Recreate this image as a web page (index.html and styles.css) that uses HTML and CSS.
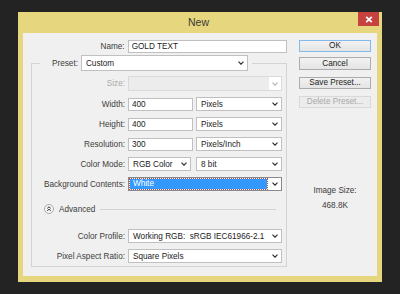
FILE: index.html
```html
<!DOCTYPE html>
<html lang="en">
<head>
    <meta charset="UTF-8">
    <meta name="viewport" content="width=device-width, initial-scale=1.0">
    <title>New</title>
    <link rel="stylesheet" href="styles.css">
</head>
<body>
    <div class="dialog">
        <!-- Title bar -->
        <div class="titlebar">
            <span></span>
            <span class="title">New</span>
            <button class="close" aria-label="Close">
                <svg width="8" height="7" viewBox="0 0 8 7"><path d="M1.2 .8 6.8 6.2M6.8 .8 1.2 6.2" stroke="#fff" stroke-width="1.7" fill="none"/></svg>
            </button>
        </div>

        <div class="content">
            <!-- Left: document settings -->
            <div class="main">
                <div class="row name-row">
                    <label for="name" class="row-label">Name:</label>
                    <input type="text" id="name" class="field name-field" value="GOLD TEXT">
                </div>

                <fieldset class="group">
                    <legend>
                        <label class="preset-label">Preset:</label>
                        <div class="select preset-select">
                            <span>Custom</span>
                            <svg class="chev" width="6" height="4" viewBox="0 0 6 4"><path d="M.5.6 3 3.2 5.5.6" fill="none" stroke="#333" stroke-width="1.2"/></svg>
                        </div>
                    </legend>

                    <div class="row size-row">
                        <span class="row-label disabled">Size:</span>
                        <div class="select full disabled">
                            <span></span>
                            <span class="chev-box">
                                <svg class="chev" width="6" height="4" viewBox="0 0 6 4"><path d="M.5.6 3 3.2 5.5.6" fill="none" stroke="#b5b5b5" stroke-width="1.1"/></svg>
                            </span>
                        </div>
                    </div>

                    <div class="row">
                        <label class="row-label">Width:</label>
                        <input type="text" class="field num-field" value="400">
                        <div class="select unit">
                            <span>Pixels</span>
                            <svg class="chev" width="6" height="4" viewBox="0 0 6 4"><path d="M.5.6 3 3.2 5.5.6" fill="none" stroke="#333" stroke-width="1.2"/></svg>
                        </div>
                    </div>

                    <div class="row">
                        <label class="row-label">Height:</label>
                        <input type="text" class="field num-field" value="400">
                        <div class="select unit">
                            <span>Pixels</span>
                            <svg class="chev" width="6" height="4" viewBox="0 0 6 4"><path d="M.5.6 3 3.2 5.5.6" fill="none" stroke="#333" stroke-width="1.2"/></svg>
                        </div>
                    </div>

                    <div class="row">
                        <label class="row-label">Resolution:</label>
                        <input type="text" class="field num-field" value="300">
                        <div class="select unit">
                            <span>Pixels/Inch</span>
                            <svg class="chev" width="6" height="4" viewBox="0 0 6 4"><path d="M.5.6 3 3.2 5.5.6" fill="none" stroke="#333" stroke-width="1.2"/></svg>
                        </div>
                    </div>

                    <div class="row">
                        <label class="row-label">Color Mode:</label>
                        <div class="select mode">
                            <span>RGB Color</span>
                            <svg class="chev" width="6" height="4" viewBox="0 0 6 4"><path d="M.5.6 3 3.2 5.5.6" fill="none" stroke="#333" stroke-width="1.2"/></svg>
                        </div>
                        <div class="select unit">
                            <span>8 bit</span>
                            <svg class="chev" width="6" height="4" viewBox="0 0 6 4"><path d="M.5.6 3 3.2 5.5.6" fill="none" stroke="#333" stroke-width="1.2"/></svg>
                        </div>
                    </div>

                    <div class="row">
                        <label class="row-label">Background Contents:</label>
                        <div class="select full focused">
                            <span class="picked">White</span>
                            <svg class="chev" width="6" height="4" viewBox="0 0 6 4"><path d="M.5.6 3 3.2 5.5.6" fill="none" stroke="#333" stroke-width="1.2"/></svg>
                        </div>
                    </div>

                    <!-- Advanced section -->
                    <div class="advanced">
                        <svg class="adv-icon" width="10" height="10" viewBox="0 0 10 10">
                            <circle cx="5" cy="5" r="4.5" fill="#f6f6f6" stroke="#a8a8a8"/>
                            <path d="M3.2 4.4 5 2.8 6.8 4.4M3.2 6.8 5 5.2 6.8 6.8" fill="none" stroke="#333" stroke-width="1"/>
                        </svg>
                        <span>Advanced</span>
                        <span class="adv-line"></span>
                    </div>

                    <div class="row profile-row">
                        <label class="row-label">Color Profile:</label>
                        <div class="select full">
                            <span>Working RGB:&nbsp; sRGB IEC61966-2.1</span>
                            <svg class="chev" width="6" height="4" viewBox="0 0 6 4"><path d="M.5.6 3 3.2 5.5.6" fill="none" stroke="#333" stroke-width="1.2"/></svg>
                        </div>
                    </div>

                    <div class="row">
                        <label class="row-label">Pixel Aspect Ratio:</label>
                        <div class="select full">
                            <span>Square Pixels</span>
                            <svg class="chev" width="6" height="4" viewBox="0 0 6 4"><path d="M.5.6 3 3.2 5.5.6" fill="none" stroke="#333" stroke-width="1.2"/></svg>
                        </div>
                    </div>
                </fieldset>
            </div>

            <!-- Right: buttons and size -->
            <div class="side">
                <button class="btn default">OK</button>
                <button class="btn">Cancel</button>
                <button class="btn save">Save Preset...</button>
                <button class="btn delete" disabled>Delete Preset...</button>

                <div class="image-size">
                    <div>Image Size:</div>
                    <div>468.8K</div>
                </div>
            </div>
        </div>
    </div>
</body>
</html>
```

FILE: styles.css
```css
/* General styles */
body {
    margin: 0;
    height: 294px;
    background-color: #232323;
    font-family: "Liberation Sans", Arial, sans-serif;
    font-size: 8.2px;
    color: #3c3c3c;
}

.dialog {
    margin: 12px 0 0 18px;
    width: 364px;
    height: 270px;
    display: flex;
    flex-direction: column;
    background-color: #e6d67d;
}

/* Title bar */
.titlebar {
    height: 21px;
    display: grid;
    grid-template-columns: 1fr auto 1fr;
    padding-right: 3px;
}

.title {
    font-size: 10.5px;
    line-height: 21px;
    color: #3a3a3a;
}

.close {
    justify-self: end;
    width: 21px;
    height: 14px;
    padding: 0;
    border: none;
    background-color: #c7423f;
    display: flex;
    align-items: center;
    justify-content: center;
}

.content {
    flex: 1;
    margin: 0 5px 6px;
    background-color: #f0f0f0;
    display: flex;
    padding-top: 7px;
}

.main {
    width: 264px;
    padding-left: 8px;
    box-sizing: border-box;
}

/* Rows */
.row {
    display: flex;
    align-items: center;
    height: 14px;
    margin-top: 6px;
}

.row-label {
    width: 93px;
    margin-right: 3px;
    text-align: right;
    white-space: nowrap;
}

.row-label.disabled {
    color: #a9a9a9;
}

.name-row {
    margin-top: 0;
    height: 13px;
}

.name-row .row-label {
    width: 94px;
}

/* Inputs and selects */
.field {
    box-sizing: border-box;
    height: 13px;
    margin: 0;
    padding: 0 3px;
    border: 1px solid #c0c0c0;
    background-color: #fff;
    font: inherit;
    color: #222;
}

.name-field {
    width: 160px;
}

.num-field {
    width: 65px;
    margin-right: 3px;
}

.select {
    box-sizing: border-box;
    height: 14px;
    display: flex;
    align-items: center;
    justify-content: space-between;
    padding: 0 3px 0 4px;
    border: 1px solid #c0c0c0;
    background-color: #fff;
    color: #222;
    white-space: nowrap;
}

.chev {
    display: block;
    flex-shrink: 0;
}

.full {
    width: 154px;
}

.unit {
    width: 86px;
}

.mode {
    width: 63px;
    margin-right: 5px;
}

.select.disabled {
    height: 15px;
    padding: 0;
    border-color: #dadada;
    background-color: #ececec;
}

.chev-box {
    width: 12px;
    height: 13px;
    display: flex;
    align-items: center;
    justify-content: center;
    background-color: #fff;
}

.select.focused {
    padding: 1px 3px 1px 1px;
    border-color: #8a8a8a;
}

.picked {
    flex: 1;
    height: 10px;
    line-height: 10px;
    margin-right: 5px;
    padding-left: 3px;
    background-color: #3399ff;
    outline: 1px dotted #b05050;
    color: #fff;
}

/* Preset group */
.group {
    margin: 2px 0 0;
    padding: 0 0 3px;
    width: 256px;
    box-sizing: border-box;
    min-width: 0;
    border: 1px solid #d4d4d4;
}

.group legend {
    display: flex;
    align-items: center;
    margin-left: 8px;
    padding: 0 4px 0 12px;
    height: 16px;
}

.preset-label {
    margin-right: 3px;
}

.preset-select {
    width: 167px;
    height: 16px;
}

.size-row {
    margin-top: 5px;
    height: 15px;
}

.advanced {
    display: flex;
    align-items: center;
    height: 12px;
    margin: 12px 10px 0 12px;
}

.adv-icon {
    margin-right: 5px;
}

.adv-line {
    flex: 1;
    margin-left: 5px;
    border-top: 1px solid #d4d4d4;
}

.profile-row {
    margin-top: 14px;
}

/* Side buttons */
.side {
    width: 72px;
    margin-left: 12px;
}

.btn {
    display: block;
    width: 72px;
    height: 12px;
    margin: 0 0 7px;
    padding: 0;
    box-sizing: border-box;
    border: 1px solid #acacac;
    background: linear-gradient(#f2f2f2, #e4e4e4);
    font: inherit;
    line-height: 10px;
    color: #222;
}

.btn:nth-child(2) {
    height: 13px;
    margin-top: -1px;
}

.btn.default {
    border-color: #85b8ec;
    margin-bottom: 6px;
}

.btn.delete {
    border-color: #d8d8d8;
    background: #ececec;
    color: #a8a8a8;
}

.image-size {
    margin-top: 75px;
    text-align: center;
    line-height: 15px;
}
```
